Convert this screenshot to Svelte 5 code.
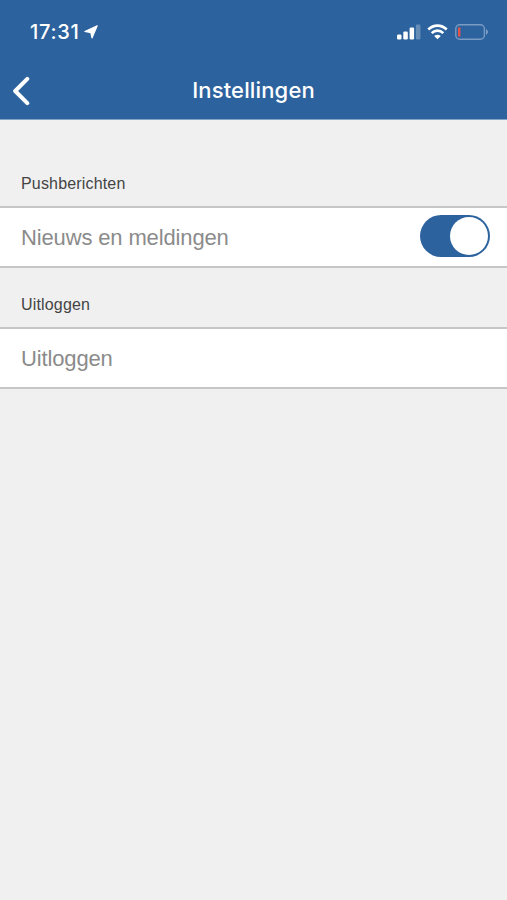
<script>
  let pushEnabled = true;

  const bars = [
    { x: 0, height: 5 },
    { x: 6.3, height: 8 },
    { x: 12.6, height: 12 },
    { x: 18.9, height: 15, weak: true }
  ];
</script>

<div class="screen">
  <header>
    <div class="status">
      <div class="clock">
        <span class="time">17:31</span>
        <svg class="location" width="14" height="14" viewBox="0 0 14 14">
          <path d="M13.2 .8 L8 12.9 L6.8 7.6 L.9 6.5 Z" />
        </svg>
      </div>
      <div class="indicators">
        <svg width="24" height="16" viewBox="0 0 24 16">
          {#each bars as bar}
            <rect class:weak={bar.weak} x={bar.x} y={15.5 - bar.height} width="4.5" height={bar.height} rx="1.2" fill="#fff" />
          {/each}
        </svg>
        <svg class="wifi" width="21" height="16" viewBox="0 0 21 16">
          <path d="M1.3 5.5 C6.5 .2 14.5 .2 19.7 5.5" />
          <path d="M4.7 9.1 C8 5.9 13 5.9 16.3 9.1" />
          <path class="dot" d="M7.2 12 C9.2 10.3 11.8 10.3 13.8 12 L10.5 15.3 Z" />
        </svg>
        <svg class="battery" width="34" height="16" viewBox="0 0 34 16">
          <rect class="shell" x=".8" y=".8" width="28.6" height="14.4" rx="4" />
          <rect class="charge" x="3" y="3.2" width="2.4" height="9.6" rx="1" />
          <path class="tip" d="M31 5.3 C33.7 6.2 33.7 9.8 31 10.7 Z" />
        </svg>
      </div>
    </div>
    <div class="nav">
      <button class="back" aria-label="Terug">
        <svg width="20" height="30" viewBox="0 0 20 30">
          <path d="M15.3 2.8 L3.2 15 L15.3 27.2" />
        </svg>
      </button>
      <h1>Instellingen</h1>
    </div>
  </header>

  <h2 class="first">Pushberichten</h2>
  <div class="row">
    <span class="label">Nieuws en meldingen</span>
    <button class="toggle" class:on={pushEnabled} role="switch" aria-checked={pushEnabled} aria-label="Nieuws en meldingen" on:click={() => (pushEnabled = !pushEnabled)}>
      <span class="knob"></span>
    </button>
  </div>

  <h2>Uitloggen</h2>
  <div class="row">
    <span class="label">Uitloggen</span>
  </div>
</div>

<style>
  :global(body) { margin: 0; background: #f0f0f0; }
  .screen { min-height: 900px; background: #f0f0f0; font-family: "Liberation Sans", Arial, sans-serif; }
  button { border: 0; padding: 0; background: none; cursor: pointer; }
  svg { display: block; }

  header { height: 120px; box-sizing: border-box; background: #2c629d; color: #fff; border-bottom: 1px solid #83a2c5; }
  .status { display: flex; justify-content: space-between; height: 61px; padding: 2px 18px 0 30px; box-sizing: border-box; }
  .clock { display: flex; align-items: center; gap: 4px; }
  .time { width: 50px; padding-top: 1px; font: 500 20px/24px Inter, sans-serif; letter-spacing: 0.7px; white-space: nowrap; }
  .location { fill: #fff; stroke: #fff; stroke-width: 1.2; stroke-linejoin: round; }
  .indicators { display: flex; align-items: center; gap: 7px; }
  .weak { opacity: 0.28; }
  .wifi { margin-left: -1px; fill: none; stroke: #fff; stroke-width: 2.7; }
  .wifi .dot { fill: #fff; stroke: none; }
  .shell { fill: none; stroke: #789cc4; stroke-width: 1.4; }
  .charge { fill: #e05648; }
  .tip { fill: #789cc4; }

  .nav { display: grid; grid-template-columns: 60px 1fr 60px; align-items: center; height: 58px; }
  .back { padding: 1px 0 0 12px; }
  .back path { fill: none; stroke: #fff; stroke-width: 4; stroke-linecap: round; stroke-linejoin: round; }
  h1 { margin: 0; text-align: center; font: 500 22px/28px Inter, sans-serif; letter-spacing: 0.15px; }

  h2 { margin: 0; padding: 27px 21px 12px; font-size: 16px; font-weight: 400; line-height: 20px; letter-spacing: 0.17px; color: #444; }
  h2.first { padding: 54px 21px 12px; }
  .row { display: flex; align-items: center; justify-content: space-between; height: 62px; box-sizing: border-box; padding: 0 17px 0 21px; background: #fff; border-top: 2px solid #c6c6c6; border-bottom: 2px solid #c6c6c6; font-size: 22px; color: #8b8b8b; }
  .label { padding-top: 2px; letter-spacing: -0.14px; }

  .toggle { display: flex; align-items: center; width: 70px; height: 42px; box-sizing: border-box; padding: 2px; margin-bottom: 2px; border-radius: 21px; background: #ccc; }
  .toggle.on { justify-content: flex-end; background: #2c629d; }
  .knob { width: 38px; height: 38px; border-radius: 50%; background: #fff; }
</style>
